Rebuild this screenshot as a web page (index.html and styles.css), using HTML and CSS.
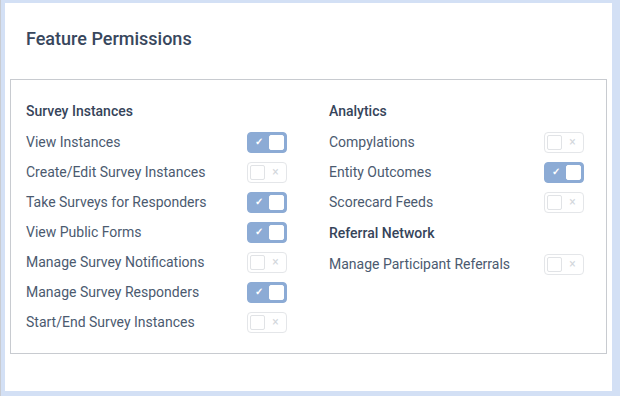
FILE: index.html
```html
<!DOCTYPE html>
<html lang="en">
<head>
    <meta charset="UTF-8">
    <meta name="viewport" content="width=device-width, initial-scale=1.0">
    <title>Feature Permissions</title>
    <link rel="stylesheet" href="styles.css">
</head>
<body>
    <div class="card">
        <h2 class="card-title">Feature Permissions</h2>

        <div class="perm-box">
            <!-- left column -->
            <div class="perm-col">
                <h4 class="perm-group">Survey Instances</h4>
                <div class="perm-row"><span>View Instances</span><span class="toggle on"><i class="mark">&#10003;</i><i class="knob"></i></span></div>
                <div class="perm-row"><span>Create/Edit Survey Instances</span><span class="toggle"><i class="knob"></i><i class="mark">&#215;</i></span></div>
                <div class="perm-row"><span>Take Surveys for Responders</span><span class="toggle on"><i class="mark">&#10003;</i><i class="knob"></i></span></div>
                <div class="perm-row"><span>View Public Forms</span><span class="toggle on"><i class="mark">&#10003;</i><i class="knob"></i></span></div>
                <div class="perm-row"><span>Manage Survey Notifications</span><span class="toggle"><i class="knob"></i><i class="mark">&#215;</i></span></div>
                <div class="perm-row"><span>Manage Survey Responders</span><span class="toggle on"><i class="mark">&#10003;</i><i class="knob"></i></span></div>
                <div class="perm-row"><span>Start/End Survey Instances</span><span class="toggle"><i class="knob"></i><i class="mark">&#215;</i></span></div>
            </div>

            <!-- right column -->
            <div class="perm-col">
                <h4 class="perm-group">Analytics</h4>
                <div class="perm-row"><span>Compylations</span><span class="toggle"><i class="knob"></i><i class="mark">&#215;</i></span></div>
                <div class="perm-row"><span>Entity Outcomes</span><span class="toggle on"><i class="mark">&#10003;</i><i class="knob"></i></span></div>
                <div class="perm-row"><span>Scorecard Feeds</span><span class="toggle"><i class="knob"></i><i class="mark">&#215;</i></span></div>
                <h4 class="perm-group sub">Referral Network</h4>
                <div class="perm-row"><span>Manage Participant Referrals</span><span class="toggle"><i class="knob"></i><i class="mark">&#215;</i></span></div>
            </div>
        </div>
    </div>
</body>
</html>
```

FILE: styles.css
```css
html, body {
    height: 100%;
}
body {
    margin: 0;
    padding: 3px 8px 5px 4px;
    box-sizing: border-box;
    background-color: #d3e0f5;
    border-left: 1px solid #c9ccd2;
    font-family: Roboto, "Liberation Sans", sans-serif;
}
.card {
    height: 100%;
    background-color: #fff;
    padding: 25px 5px 0 5px;
    box-sizing: border-box;
}
.card-title {
    margin: 0 0 29px 16px;
    font-size: 18px;
    line-height: 22px;
    font-weight: 500;
    color: #38475d;
}
.perm-box {
    border: 1px solid #c8cbd0;
    padding: 16px 15px 16px 15px;
    display: grid;
    grid-template-columns: 261px 255px;
    column-gap: 42px;
    align-items: start;
}
.perm-group {
    margin: 0;
    height: 31px;
    line-height: 31px;
    font-size: 14px;
    font-weight: 500;
    color: #36445a;
}
.perm-group.sub {
    height: 32px;
    line-height: 33px;
}
.perm-row {
    height: 30px;
    display: flex;
    align-items: center;
    justify-content: space-between;
    font-size: 14px;
    color: #4b5a6f;
}
.toggle {
    width: 40px;
    height: 21px;
    box-sizing: border-box;
    border: 1px solid #e4e6e9;
    border-radius: 4px;
    display: flex;
    align-items: center;
    justify-content: space-between;
    padding: 0 2px;
    background-color: #fff;
}
.toggle .knob {
    width: 15px;
    height: 15px;
    box-sizing: border-box;
    border: 1px solid #e1e3e6;
    border-radius: 2px;
    background-color: #fff;
}
.toggle .mark {
    font-style: normal;
    font-size: 12px;
    line-height: 1;
    width: 17px;
    text-align: center;
    color: #d3d7dc;
}
.toggle.on {
    background-color: #8cabd5;
    border-color: #8cabd5;
}
.toggle.on .knob {
    border-color: #fff;
}
.toggle.on .mark {
    color: #fff;
    font-size: 10px;
    font-weight: 700;
}
```
